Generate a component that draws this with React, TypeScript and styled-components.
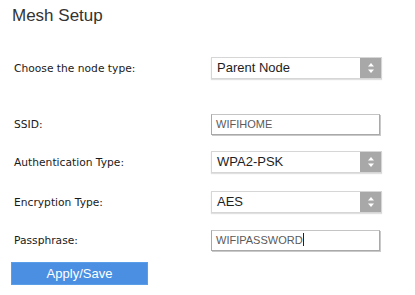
import styled, { createGlobalStyle } from "styled-components";

const GlobalStyle = createGlobalStyle`
  html, body {
    margin: 0;
    padding: 0;
    background: #ffffff;
  }
`;

const Page = styled.div`
  width: 415px;
  height: 295px;
  padding: 6px 0 0 12px;
  box-sizing: border-box;
  font-family: "Liberation Sans", Arial, sans-serif;
  overflow: hidden;
`;

const Title = styled.h1`
  margin: 0;
  font-size: 17px;
  font-weight: normal;
  color: #333333;
  line-height: 20px;
`;

const Form = styled.div`
  display: flex;
  flex-direction: column;
`;

const Row = styled.div<{ $top: number }>`
  display: grid;
  grid-template-columns: 199px 1fr;
  align-items: center;
  height: 22px;
  margin-top: ${(p) => p.$top}px;
`;

const Label = styled.label`
  padding-left: 2px;
  font-family: "DejaVu Sans", Tahoma, sans-serif;
  font-size: 10.7px;
  color: #1a1a1a;
`;

const SelectBox = styled.div`
  display: flex;
  width: 171px;
  height: 22px;
  box-sizing: border-box;
  border: 1px solid #d6d6d6;
  box-shadow: 0 1px 1px rgba(0, 0, 0, 0.12);
  background: #ffffff;
`;

const SelectValue = styled.div`
  flex: 1;
  padding-left: 5px;
  font-size: 13px;
  line-height: 20px;
  color: #1e1e1e;
`;

const ArrowBox = styled.div`
  width: 21px;
  background: #a8a8a8;
  display: flex;
  align-items: center;
  justify-content: center;
`;

const TextInput = styled.div`
  width: 169px;
  height: 21px;
  box-sizing: border-box;
  border: 1px solid #a9a9a9;
  border-top-color: #c4c4c4;
  box-shadow: 1px 1px 0 #c9c9c9;
  padding-left: 4px;
  font-size: 11px;
  line-height: 19px;
  color: #5a5a5a;
  background: #ffffff;
`;

const Caret = styled.span`
  display: inline-block;
  width: 1px;
  height: 13px;
  background: #222222;
  vertical-align: -2px;
`;

const Button = styled.button`
  margin-top: 11px;
  width: 137px;
  height: 23px;
  margin-left: -1px;
  border: 1px solid #5a9de8;
  background: #4a8fe2;
  color: #ffffff;
  font-family: "Liberation Sans", Arial, sans-serif;
  font-size: 13px;
  padding: 0;
`;

const Arrows = () => (
  <svg width="8" height="12" viewBox="0 0 8 12">
    <path d="M4 1 L7 4.5 H1 Z" fill="#ffffff" />
    <path d="M4 11 L7 7.5 H1 Z" fill="#ffffff" />
  </svg>
);

const Select = ({ value }: { value: string }) => (
  <SelectBox>
    <SelectValue>{value}</SelectValue>
    <ArrowBox>
      <Arrows />
    </ArrowBox>
  </SelectBox>
);

export default function App() {
  return (
    <Page>
      <GlobalStyle />
      <Title>Mesh Setup</Title>
      <Form>
        <Row $top={31}>
          <Label>Choose the node type:</Label>
          <Select value="Parent Node" />
        </Row>
        <Row $top={34}>
          <Label>SSID:</Label>
          <TextInput>WIFIHOME</TextInput>
        </Row>
        <Row $top={16}>
          <Label>Authentication Type:</Label>
          <Select value="WPA2-PSK" />
        </Row>
        <Row $top={18}>
          <Label>Encryption Type:</Label>
          <Select value="AES" />
        </Row>
        <Row $top={16}>
          <Label>Passphrase:</Label>
          <TextInput>
            WIFIPASSWORD
            <Caret />
          </TextInput>
        </Row>
        <Button>Apply/Save</Button>
      </Form>
    </Page>
  );
}
